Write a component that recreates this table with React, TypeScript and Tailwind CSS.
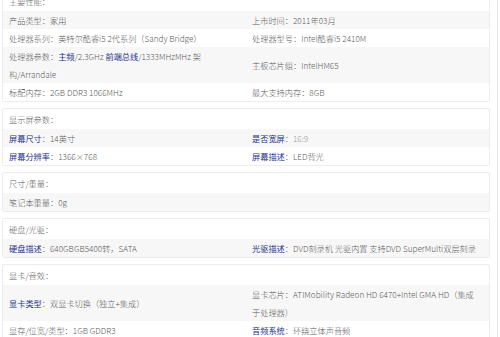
import React from "react";

type Part = string | {link: string};

interface Cell {
    label: Part;
    value: React.ReactNode;
}

interface Row {
    left?: Cell;
    right?: Cell;
}

interface Section {
    title: string;
    rows: Row[];
}

const sections: Section[] = [
    {
        title: "主要性能：",
        rows: [
            {left: {label: "产品类型", value: "家用"}, right: {label: "上市时间", value: "2011年03月"}},
            {left: {label: "处理器系列", value: "英特尔酷睿i5 2代系列（Sandy Bridge）"}, right: {label: "处理器型号", value: "Intel酷睿i5 2410M"}},
            {
                left: {
                    label: "处理器参数",
                    value: (
                        <>
                            <a className="text-[#27358a] font-normal">主频</a>/2.3GHz <a className="text-[#27358a] font-normal">前端总线</a>/1333MHzMHz 架<br />构/Arrandale
                        </>
                    ),
                },
                right: {label: "主板芯片组", value: "IntelHM65"},
            },
            {left: {label: "标配内存", value: "2GB DDR3 1066MHz"}, right: {label: "最大支持内存", value: "8GB"}},
        ],
    },
    {
        title: "显示屏参数：",
        rows: [
            {left: {label: {link: "屏幕尺寸"}, value: "14英寸"}, right: {label: {link: "是否宽屏"}, value: <span className="text-[#999]">16:9</span>}},
            {left: {label: {link: "屏幕分辨率"}, value: "1366×768"}, right: {label: {link: "屏幕描述"}, value: "LED背光"}},
        ],
    },
    {
        title: "尺寸/重量：",
        rows: [{left: {label: "笔记本重量", value: "0g"}}],
    },
    {
        title: "硬盘/光驱：",
        rows: [
            {left: {label: {link: "硬盘描述"}, value: "640GBGB5400转，SATA"}, right: {label: {link: "光驱描述"}, value: "DVD刻录机 光驱内置 支持DVD SuperMulti双层刻录"}},
        ],
    },
    {
        title: "显卡/音效：",
        rows: [
            {
                left: {label: {link: "显卡类型"}, value: "双显卡切换（独立+集成）"},
                right: {label: "显卡芯片", value: <>ATIMobility Radeon HD 6470+Intel GMA HD（集成<br />于处理器）</>},
            },
            {left: {label: "显存/位宽/类型", value: "1GB GDDR3"}, right: {label: {link: "音频系统"}, value: "环绕立体声音频"}},
        ],
    },
];

function Label({label}: {label: Part}) {
    if (typeof label === "string") return <span>{label}：</span>;
    return (
        <span>
            <a className="text-[#27358a] font-normal">{label.link}</a>：
        </span>
    );
}

function CellView({cell}: {cell?: Cell}) {
    return (
        <div className="flex items-center pl-[6px] whitespace-nowrap">
            {cell && (
                <div>
                    <Label label={cell.label} />
                    {cell.value}
                </div>
            )}
        </div>
    );
}

function SectionCard({section}: {section: Section}) {
    return (
        <div className="border border-[#ececec] rounded-[2px] bg-white">
            <div className="h-[20px] flex items-center pl-[6px]">{section.title}</div>
            {section.rows.map((row, i) => (
                <div key={i} className={"grid grid-cols-2 " + (i % 2 === 0 ? "bg-[#f7f7f7]" : "bg-white")}>
                    <CellView cell={row.left} />
                    <CellView cell={row.right} />
                </div>
            ))}
        </div>
    );
}

export default function App() {
    return (
        <div className="w-[500px] h-[337px] overflow-hidden bg-white">
            <div
                className="w-[498px] -mt-[10px] pl-[2px] pr-[7px] border-r border-[#dde6ea] flex flex-col gap-[6px] text-[8.2px] leading-[18px] text-[#5c5c5c] font-light"
                style={{fontFamily: '"Noto Sans CJK SC", "Noto Sans", sans-serif'}}
            >
                {sections.map((s, i) => (
                    <SectionCard key={i} section={s} />
                ))}
            </div>
        </div>
    );
}
